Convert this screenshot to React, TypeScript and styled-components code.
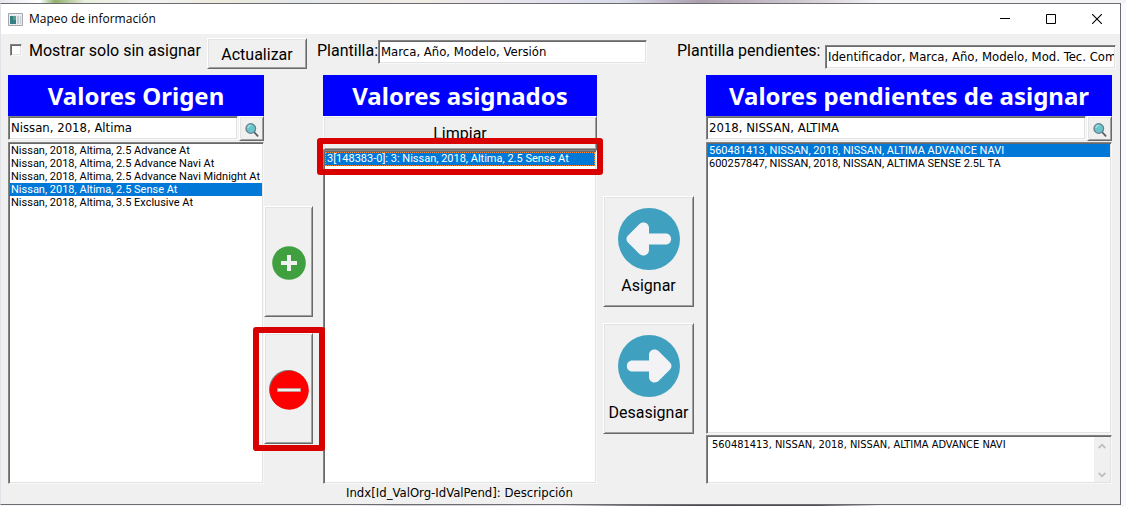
import React, { useState } from "react";
import styled, { createGlobalStyle, css } from "styled-components";

const Global = createGlobalStyle`
  * { box-sizing: border-box; }
  body {
    margin: 0;
    background: #fafafc;
    color: #000;
    font-family: "DejaVu Sans Condensed", "DejaVu Sans", sans-serif;
    font-size: 13px;
  }
  button, input, textarea { font-family: inherit; color: inherit; }
`;

const sunken = css`
  background: #fff;
  border: 1px solid;
  border-color: #838383 #f8f8f8 #f8f8f8 #838383;
  box-shadow: inset 1px 1px 0 #696969, inset -1px -1px 0 #e3e3e3;
`;

const raised = css`
  background: #f0f0f0;
  border: 1px solid;
  border-color: #fff #696969 #696969 #fff;
  box-shadow: inset 1px 1px 0 #e3e3e3, inset -1px -1px 0 #a0a0a0;
`;

const Desktop = styled.div`
  min-height: 100vh;
  display: flex;
  flex-direction: column;
  padding: 3px 5px 1px 0;
  background:
    linear-gradient(90deg, #e6e6ee 0, #fff 40px, #8fae6a 55px, #e9eedf 85px, #f2f2f4 150px, #eceadb 220px, #e3e6ea 300px, #f1ebe4 420px, #e5e3ee 520px, #d9dbe9 620px, #ab9fae 700px, #cfc8d0 800px, #f3f3f6 880px) 0 0 / 100% 3px no-repeat,
    linear-gradient(90deg, #f4f4f6 350px, #c8ccd4 400px, #e4e6ea 560px, #77747e 630px, #4a4650 700px, #57505c 820px, #f4f4f6 880px) 0 100% / 100% 1px no-repeat,
    #fafafc;
`;

const Window = styled.main`
  flex: 1;
  display: flex;
  flex-direction: column;
  background: #f0f0f0;
  border: 1px solid #6b6b70;
  border-left-color: #e2e2e8;
`;

const TitleBar = styled.header`
  height: 30px;
  display: flex;
  align-items: center;
  padding-left: 7px;
  background: #fff;
`;

const Title = styled.h1`
  flex: 1;
  margin: 0 0 0 6px;
  font: 12px/16px "Open Sans", "Noto Sans", sans-serif;
`;

const CaptionButton = styled.button`
  width: 46px;
  height: 30px;
  padding: 0;
  border: 0;
  background: none;
  display: grid;
  place-items: center;
`;

const Toolbar = styled.form`
  display: flex;
  align-items: flex-start;
  height: 41px;
  padding: 4px 4px 0 9px;
  font-family: Roboto, sans-serif;
  font-size: 16px;
  line-height: 26px;
`;

const CheckLabel = styled.label`
  display: flex;
  align-items: center;
  gap: 7px;
  width: 197px;
  white-space: nowrap;
`;

const Check = styled.input`
  ${sunken}
  appearance: none;
  flex: none;
  width: 12px;
  height: 12px;
  margin: 0 0 2px;
  &:checked { background: #0078d7; }
`;

const Button = styled.button<{ $width?: number; $height: number }>`
  ${raised}
  width: ${(p) => (p.$width ? `${p.$width}px` : "100%")};
  height: ${(p) => p.$height}px;
  flex: none;
  display: flex;
  flex-direction: column;
  align-items: center;
  justify-content: center;
  gap: 5px;
  padding: 2px 0 0;
  font-family: Roboto, sans-serif;
  font-size: 16px;
  line-height: 22px;
`;

const Field = styled.div<{ $grow: number; $label: number; $before: number; $drop: number }>`
  flex: ${(p) => p.$grow} 1 0;
  min-width: 0;
  display: flex;
  margin-left: ${(p) => p.$before}px;
  white-space: nowrap;
  label { flex: none; width: ${(p) => p.$label}px; }
  input { margin-top: ${(p) => p.$drop}px; }
`;

const TextBox = styled.input`
  ${sunken}
  flex: 1;
  min-width: 0;
  height: 24px;
  padding: 0 1px 2px 2px;
  font-family: "DejaVu Sans Condensed", "DejaVu Sans", sans-serif;
  font-size: 13px;
`;

const Columns = styled.div`
  flex: 1;
  display: grid;
  grid-template-columns: 256fr 59px 274fr 109px 406fr;
  padding: 0 8px 0 7px;
`;

const Column = styled.section`
  min-width: 0;
  display: flex;
  flex-direction: column;
`;

const Heading = styled.h2`
  margin: 0;
  background: #00f;
  color: #fff;
  text-align: center;
  font-family: "Noto Sans", sans-serif;
  font-size: 24px;
  line-height: 41px;
  white-space: nowrap;
`;

const SearchRow = styled.form`
  display: flex;
  gap: 1px;
  height: 26px;
`;

const ListBox = styled.ul`
  ${sunken}
  flex: 1;
  margin: 0;
  padding: 1px;
  list-style: none;
  font-family: Roboto, sans-serif;
  font-size: 11px;
  line-height: 13px;
`;

const Option = styled.li<{ $focus?: boolean }>`
  padding: 0 1px;
  white-space: nowrap;
  overflow: hidden;
  cursor: default;
  &[aria-selected="true"] { background: #0078d7; color: #fff; }
  ${(p) => p.$focus && css`
    padding: 0 2px;
    line-height: 14px;
    outline: 1px dotted #ff8728;
    outline-offset: -1px;
  `}
`;

const Actions = styled.div<{ $top: number; $left: number }>`
  display: flex;
  flex-direction: column;
  gap: 16px;
  padding: ${(p) => p.$top}px 0 0 ${(p) => p.$left}px;
`;

const Marked = styled.div`
  position: relative;
  display: flex;
  flex-direction: column;
`;

const MarkedList = styled(Marked)`
  flex: 1;
`;

const Mark = styled.span<{ $inset: string; $height: number }>`
  position: absolute;
  inset: ${(p) => p.$inset};
  height: ${(p) => p.$height}px;
  border: 6px solid #d90000;
  border-radius: 3px;
  pointer-events: none;
  z-index: 1;
`;

const Detail = styled.div`
  ${sunken}
  display: flex;
  height: 49px;
  margin-top: 1px;
  padding: 1px;
`;

const DetailText = styled.textarea`
  flex: 1;
  border: 0;
  padding: 1px 4px;
  resize: none;
  overflow: hidden;
  background: none;
  font-size: 11px;
  line-height: 13px;
`;

const ScrollTrack = styled.div`
  width: 16px;
  display: flex;
  flex-direction: column;
  align-items: center;
  justify-content: space-between;
  padding: 6px 0 4px;
  background: #f0f0f0;
`;

const Footer = styled.footer`
  height: 20px;
  padding-left: 345px;
  font-size: 13px;
  line-height: 18px;
`;

const Lens = () => (
  <svg width="16" height="16" viewBox="0 0 16 16" aria-hidden="true">
    <path d="M10 10l3.6 3.8" stroke="#5b5b60" strokeWidth="1.8" strokeLinecap="round" />
    <circle cx="6.8" cy="6.5" r="4.8" fill="#67c5cb" stroke="#67808c" strokeWidth="1.3" />
    <path d="M4 6a3 3 0 0 1 3-2.6" stroke="#a5e4e6" strokeWidth="1.2" fill="none" />
  </svg>
);

const ArrowIcon = ({ right }: { right?: boolean }) => (
  <svg width="62" height="62" viewBox="0 0 62 62" aria-hidden="true">
    <circle cx="31" cy="31" r="31" fill="#40a0c0" />
    <path
      transform={right ? "rotate(180 31 31)" : undefined}
      fill="#f3f3f5"
      d="M10 27.5L21 16.5C25 12.5 31 15 31 20V25.5H47.5C55 25.5 55 36.5 47.5 36.5H31V42C31 47 25 49.5 21 45.5L10 34.5C8 32.5 8 29.5 10 27.5Z"
    />
  </svg>
);

const PlusIcon = () => (
  <svg width="34" height="34" viewBox="0 0 34 34" aria-hidden="true">
    <circle cx="17" cy="17" r="16.8" fill="#40a040" />
    <path d="M15 9h4v6h6v4h-6v6h-4v-6H9v-4h6z" fill="#f0f0f0" />
  </svg>
);

const MinusIcon = () => (
  <svg width="40" height="40" viewBox="0 0 40 40" aria-hidden="true">
    <circle cx="19.3" cy="19.3" r="19.3" fill="#777" />
    <circle cx="20.3" cy="20.3" r="19.5" fill="#f00" />
    <path d="M8.500 18.500h23v3h-23z" fill="#f0f0f0" stroke="#c09a90" strokeWidth="1" />
  </svg>
);

const WindowIcon = () => (
  <svg width="15" height="13" viewBox="0 0 15 13" aria-hidden="true">
    <path d="M.5.5h14v12H.5z" fill="#e8eef2" stroke="#a4a8ac" />
    <path d="M2 3h6v8H2z" fill="#347e86" />
    <path d="M5 3h3v4H5z" fill="#55a184" />
    <path d="M9 3h2v8H9zM12 3h1v8h-1z" fill="#c6cdd2" />
  </svg>
);

const Chevron = ({ down }: { down?: boolean }) => (
  <svg width="8" height="6" viewBox="0 0 8 6" aria-hidden="true">
    <path d={down ? "M.7 1L4 4.3 7.3 1" : "M.7 5L4 1.7 7.3 5"} stroke="#bdbdbd" strokeWidth="1.8" fill="none" />
  </svg>
);

const ORIGIN = [
  "Nissan, 2018, Altima, 2.5 Advance At",
  "Nissan, 2018, Altima, 2.5 Advance Navi At",
  "Nissan, 2018, Altima, 2.5 Advance Navi Midnight At",
  "Nissan, 2018, Altima, 2.5 Sense At",
  "Nissan, 2018, Altima, 3.5 Exclusive At",
];
const PENDING = [
  "560481413, NISSAN, 2018, NISSAN, ALTIMA ADVANCE NAVI",
  "600257847, NISSAN, 2018, NISSAN, ALTIMA SENSE 2.5L TA",
];
const ASSIGNED = ["3[148383-0]: 3: Nissan, 2018, Altima, 2.5 Sense At"];

function List({ label, items, initial, focus }: { label: string; items: string[]; initial: number; focus?: boolean }) {
  const [selected, setSelected] = useState(initial);
  return (
    <ListBox role="listbox" aria-label={label}>
      {items.map((item, i) => (
        <Option key={item} role="option" aria-selected={i === selected} $focus={focus} onClick={() => setSelected(i)}>
          {item}
        </Option>
      ))}
    </ListBox>
  );
}

function Search({ label, value }: { label: string; value: string }) {
  return (
    <SearchRow onSubmit={(e) => e.preventDefault()}>
      <TextBox aria-label={label} defaultValue={value} />
      <Button $width={25} $height={25} aria-label="Buscar">
        <Lens />
      </Button>
    </SearchRow>
  );
}

export default function App() {
  return (
    <Desktop>
      <Global />
      <Window>
        <TitleBar>
          <WindowIcon />
          <Title>Mapeo de información</Title>
          <CaptionButton aria-label="Minimizar">
            <svg width="10" height="10"><path d="M0 4.5h10" stroke="#000" /></svg>
          </CaptionButton>
          <CaptionButton aria-label="Maximizar">
            <svg width="10" height="10"><path d="M.5.5h9v9h-9z" stroke="#000" fill="none" /></svg>
          </CaptionButton>
          <CaptionButton aria-label="Cerrar">
            <svg width="10" height="10"><path d="M0 0l10 10M10 0L0 10" stroke="#000" strokeWidth="1.1" /></svg>
          </CaptionButton>
        </TitleBar>
        <Toolbar onSubmit={(e) => e.preventDefault()}>
          <CheckLabel>
            <Check type="checkbox" />
            Mostrar solo sin asignar
          </CheckLabel>
          <Button $width={100} $height={31}>Actualizar</Button>
          <Field $grow={330} $label={61} $before={10} $drop={2}>
            <label htmlFor="template">Plantilla:</label>
            <TextBox id="template" defaultValue="Marca, Año, Modelo, Versión" />
          </Field>
          <Field $grow={439} $label={148} $before={30} $drop={7}>
            <label htmlFor="pending-template">Plantilla pendientes:</label>
            <TextBox id="pending-template" defaultValue="Identificador, Marca, Año, Modelo, Mod. Tec. Comercial" />
          </Field>
        </Toolbar>
        <Columns>
          <Column>
            <Heading>Valores Origen</Heading>
            <Search label="Buscar valores origen" value="Nissan, 2018, Altima" />
            <List label="Valores Origen" items={ORIGIN} initial={3} />
          </Column>
          <Actions $top={131} $left={0}>
            <Button $width={49} $height={111} aria-label="Agregar">
              <PlusIcon />
            </Button>
            <Marked>
              <Button $width={49} $height={111} aria-label="Quitar">
                <MinusIcon />
              </Button>
              <Mark $inset="-6px -2px auto -11px" $height={124} />
            </Marked>
          </Actions>
          <Column>
            <Heading>Valores asignados</Heading>
            <Button $height={34}>Limpiar</Button>
            <MarkedList>
              <List label="Valores asignados" items={ASSIGNED} initial={0} focus />
              <Mark $inset="-12px -6px auto -6px" $height={37} />
            </MarkedList>
          </Column>
          <Actions $top={121} $left={6}>
            <Button $width={91} $height={111}>
              <ArrowIcon />
              Asignar
            </Button>
            <Button $width={91} $height={111}>
              <ArrowIcon right />
              Desasignar
            </Button>
          </Actions>
          <Column>
            <Heading>Valores pendientes de asignar</Heading>
            <Search label="Buscar valores pendientes" value="2018, NISSAN, ALTIMA" />
            <List label="Valores pendientes de asignar" items={PENDING} initial={0} />
            <Detail>
              <DetailText aria-label="Detalle" readOnly defaultValue={PENDING[0]} />
              <ScrollTrack>
                <Chevron />
                <Chevron down />
              </ScrollTrack>
            </Detail>
          </Column>
        </Columns>
        <Footer>Indx[Id_ValOrg-IdValPend]: Descripción</Footer>
      </Window>
    </Desktop>
  );
}
